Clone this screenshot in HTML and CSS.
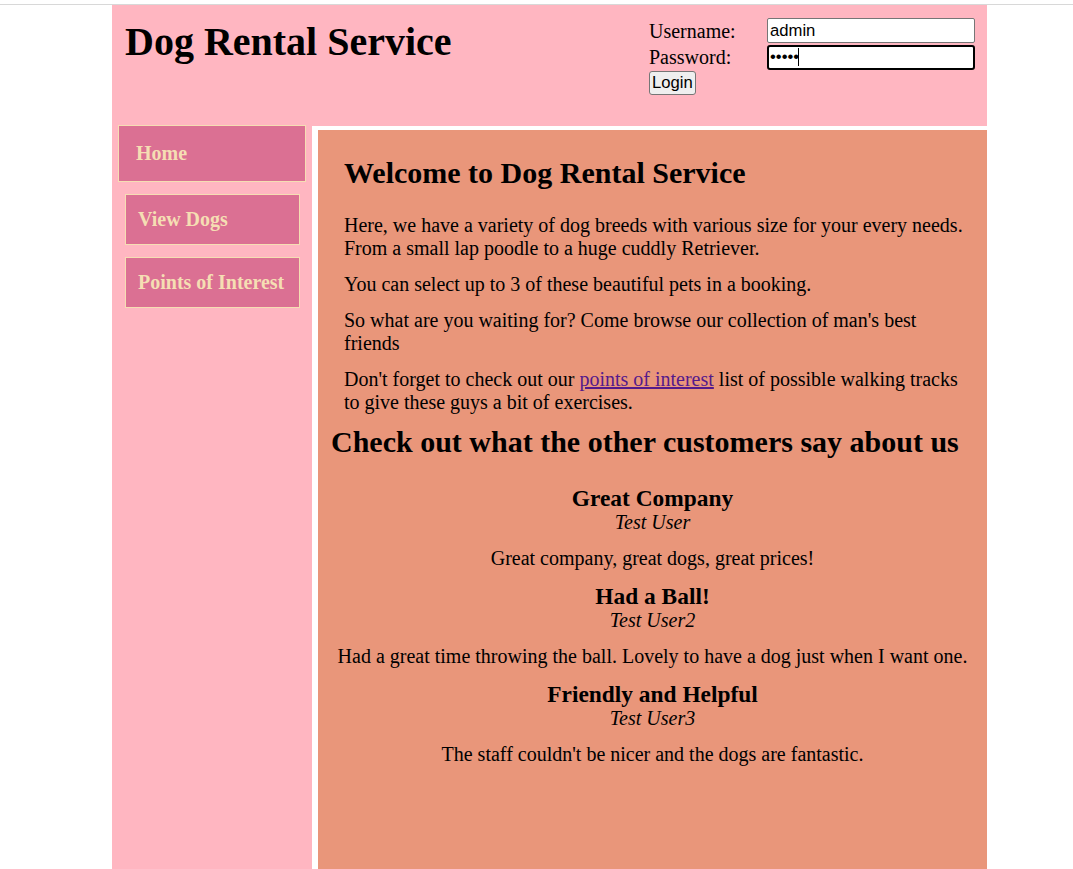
FILE: index.html
```html
<!DOCTYPE html>
<html lang="en">
<head>
<meta charset="utf-8">
<title>Dog Rental Service</title>
<link rel="stylesheet" href="styles.css">
</head>
<body>
<div class="page">
  <div class="container">
    <header class="header">
      <h1 class="site-title">Dog Rental Service</h1>
      <form class="login">
        <label class="login-label" for="username">Username:</label>
        <input class="login-input" id="username" type="text" value="admin">
        <label class="login-label" for="password">Password:</label>
        <div class="password-wrap">
          <input class="login-input login-input-focus" id="password" type="password" value="admin">
          <span class="caret"></span>
        </div>
        <div class="login-actions"><button class="login-button" type="button">Login</button></div>
      </form>
    </header>
    <div class="body-row">
      <nav class="nav">
        <a class="nav-item nav-item-active" href="#">Home</a>
        <a class="nav-item" href="#">View Dogs</a>
        <a class="nav-item" href="#">Points of Interest</a>
      </nav>
      <main class="main">
        <section class="welcome">
          <h2 class="heading">Welcome to Dog Rental Service</h2>
          <p class="text">Here, we have a variety of dog breeds with various size for your every needs. From a small lap poodle to a huge cuddly Retriever.</p>
          <p class="text">You can select up to 3 of these beautiful pets in a booking.</p>
          <p class="text">So what are you waiting for? Come browse our collection of man's best friends</p>
          <p class="text">Don't forget to check out our <a class="link" href="#">points of interest</a> list of possible walking tracks to give these guys a bit of exercises.</p>
        </section>
        <section class="reviews">
          <h2 class="heading reviews-heading">Check out what the other customers say about us</h2>
          <div class="review">
            <h3 class="review-title">Great Company</h3>
            <div class="review-author">Test User</div>
            <p class="text">Great company, great dogs, great prices!</p>
          </div>
          <div class="review">
            <h3 class="review-title">Had a Ball!</h3>
            <div class="review-author">Test User2</div>
            <p class="text">Had a great time throwing the ball. Lovely to have a dog just when I want one.</p>
          </div>
          <div class="review">
            <h3 class="review-title">Friendly and Helpful</h3>
            <div class="review-author">Test User3</div>
            <p class="text">The staff couldn't be nicer and the dogs are fantastic.</p>
          </div>
        </section>
      </main>
    </div>
  </div>
</div>
</body>
</html>
```

FILE: styles.css
```css
html, body {
  margin: 0;
  padding: 0;
  background: #ffffff;
}

body {
  padding-top: 4px;
  font-family: "Liberation Serif", "Times New Roman", serif;
  font-size: 20px;
  color: #000;
  overflow: hidden;
}

.page {
  border-top: 1px solid #d8d8d8;
}

.container {
  margin-left: 112px;
  width: 875px;
  background: #ffb6c1;
}

.header {
  display: flex;
  justify-content: space-between;
  align-items: flex-start;
  height: 121px;
  box-sizing: border-box;
  padding: 13px 12px 0 13px;
}

.site-title {
  margin: 1px 0 0;
  font-size: 40px;
  line-height: 46px;
  font-weight: bold;
}

.login {
  display: grid;
  grid-template-columns: 118px 208px;
  row-gap: 1px;
  align-items: center;
}

.login-label {
  font-size: 20px;
  line-height: 22px;
}

.login-input {
  box-sizing: border-box;
  width: 208px;
  height: 25px;
  margin: 0;
  padding: 1px 2px;
  font-family: "Liberation Sans", Arial, sans-serif;
  font-size: 16.67px;
  border: 1px solid #767676;
  border-radius: 2px;
  background: #fff;
  color: #000;
  outline: none;
}

.password-wrap {
  position: relative;
}

.login-input-focus {
  border: 2px solid #000;
  border-radius: 3px;
  padding: 0 1px;
}

.caret {
  position: absolute;
  left: 31px;
  top: 4px;
  width: 1px;
  height: 18px;
  background: #000;
}

.login-actions {
  grid-column: 1 / 3;
  margin-top: -1px;
}

.login-button {
  margin: 0;
  height: 24px;
  padding: 0 2px;
  font-family: "Liberation Sans", Arial, sans-serif;
  font-size: 16.67px;
  background: #efefef;
  border: 1px solid #767676;
  border-radius: 3px;
  color: #000;
}

.body-row {
  display: flex;
  min-height: calc(100vh - 126px);
}

.nav {
  width: 200px;
  flex: none;
  display: flex;
  flex-direction: column;
  gap: 12px;
  margin-top: -1px;
}

.nav-item {
  display: block;
  margin: 0 12px 0 13px;
  padding: 13px 12px;
  border: 1px solid #f5deb3;
  background: #db7093;
  color: #f5deb3;
  font-weight: bold;
  font-size: 20px;
  line-height: 23px;
  text-decoration: none;
}

.nav-item-active {
  margin: 0 6px 0 6px;
  padding: 16px 17px;
}

.main {
  flex: 1;
  background: #e9967a;
  border-left: 6px solid #fff;
  border-top: 4px solid #fff;
  padding: 13px 13px 40px;
}

.welcome {
  padding: 0 5px 0 13px;
}

.heading {
  margin: 13px 0 24px;
  font-size: 30px;
  line-height: 34px;
  font-weight: bold;
}

.text {
  margin: 13px 0;
  line-height: 23px;
}

.link {
  color: #551a8b;
}

.reviews {
  text-align: center;
  margin-top: -2px;
}

.reviews-heading {
  margin: 8px 0 26px;
  text-align: left;
}

.review-title {
  margin: 12px 0 0;
  font-size: 23.4px;
  line-height: 26px;
  font-weight: bold;
}

.review-author {
  font-style: italic;
  line-height: 23px;
}
```
